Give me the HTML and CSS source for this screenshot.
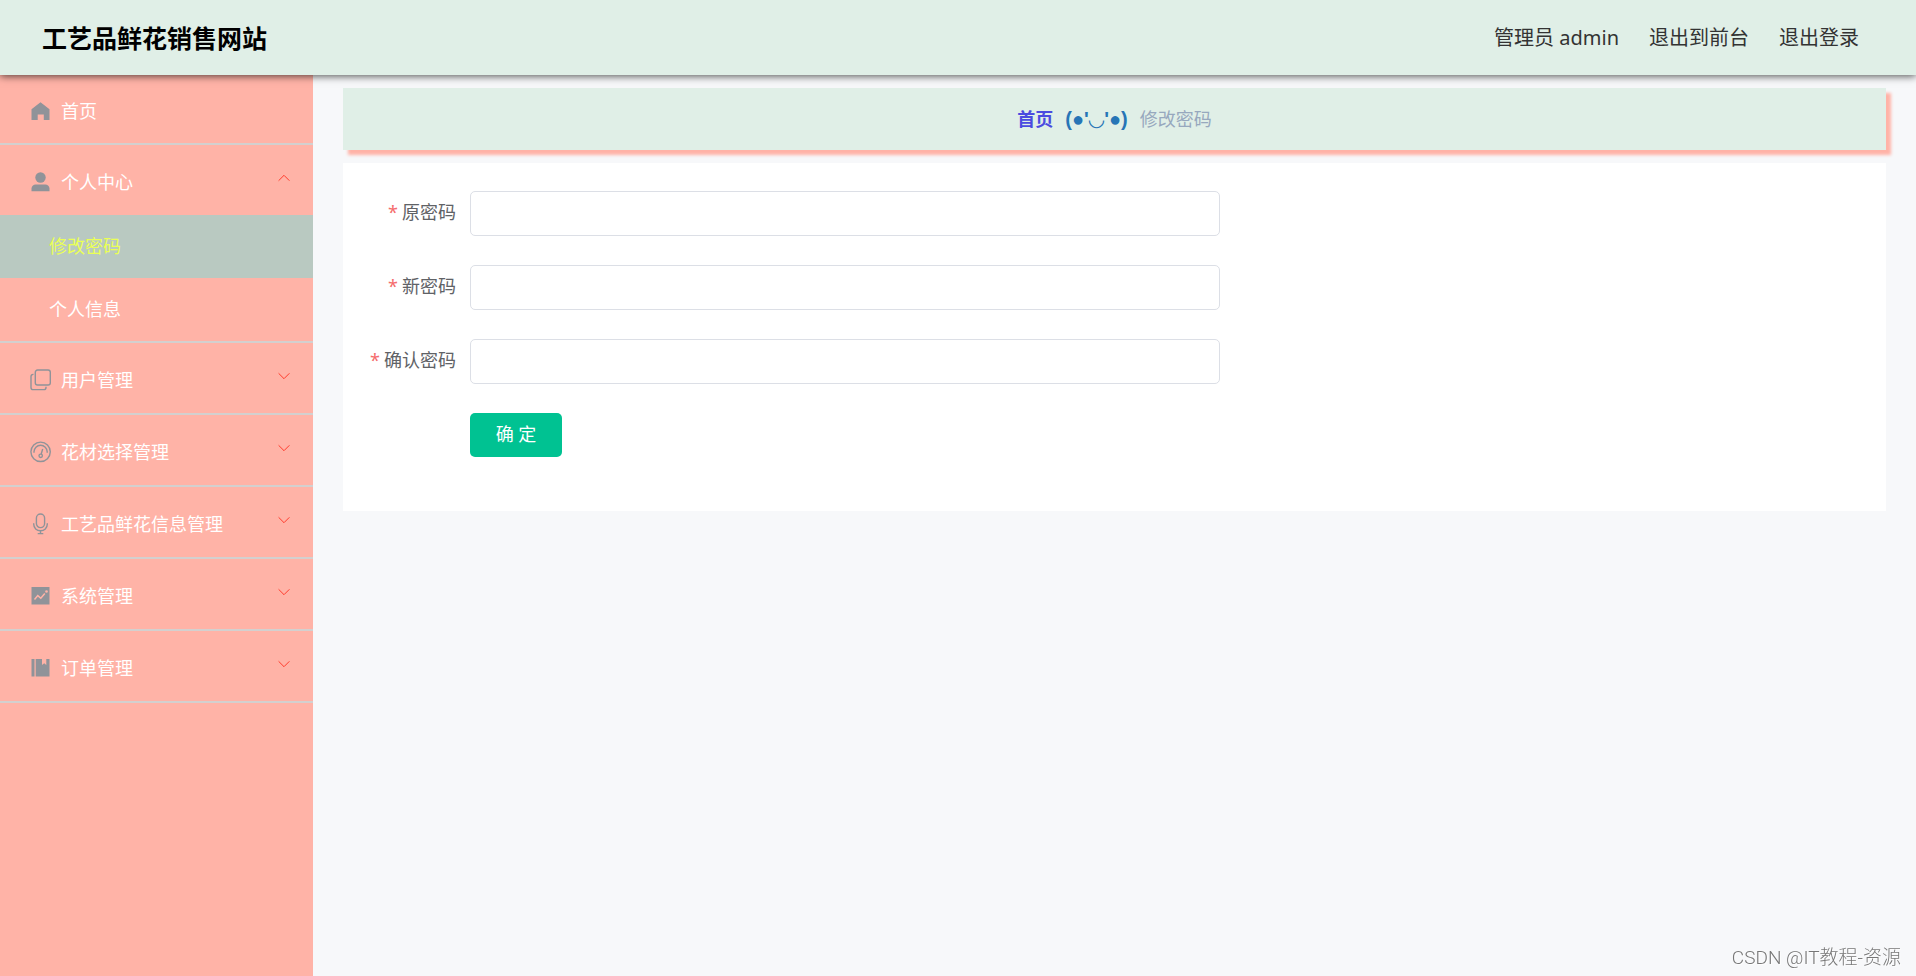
FILE: index.html
```html
<!DOCTYPE html>
<html lang="zh-CN">
<head>
<meta charset="utf-8">
<title>工艺品鲜花销售网站</title>
<link rel="stylesheet" href="styles.css">
</head>
<body>
<header class="topbar">
  <h1 class="brand">工艺品鲜花销售网站</h1>
  <nav class="account">
    <span>管理员 admin</span>
    <a href="#front">退出到前台</a>
    <a href="#logout">退出登录</a>
  </nav>
</header>
<div class="layout">
  <nav class="sidebar" aria-label="主菜单">
    <div class="group home">
      <a class="entry" href="#home">
        <svg class="icon" viewBox="0 0 22 22"><path fill="currentColor" d="M10.500 2.300 19.500 9.200V20h-5.700v-5.600H7.700V20H1.500V9.200z"/></svg>
        <span>首页</span>
      </a>
    </div>
    <div class="group">
      <button class="entry" type="button" aria-expanded="true">
        <svg class="icon" viewBox="0 0 22 22"><circle cx="10.500" cy="6.500" r="5.200" fill="currentColor"/><path fill="currentColor" d="M1.500 20.200v-2.600C1.500 15 3.300 13.400 5.700 13.400h9.600c2.400 0 4.200 1.600 4.200 4.200v2.600z"/></svg>
        <span>个人中心</span>
        <svg class="chevron" viewBox="0 0 12 12"><path d="M.6 8.700 6 3.300l5.400 5.400" fill="none" stroke="currentColor"/></svg>
      </button>
      <a class="sub active" href="#password">修改密码</a>
      <a class="sub" href="#profile">个人信息</a>
    </div>
    <div class="group">
      <button class="entry" type="button" aria-expanded="false">
        <svg class="icon" viewBox="0 0 22 22" fill="none" stroke="currentColor" stroke-width="1.400"><rect x="5.300" y="1" width="15" height="15" rx="2.200"/><path d="M3.500 5.400H3.200A2.200 2.200 0 0 0 1 7.600v10.800A2.200 2.200 0 0 0 3.200 20.600h10.600A2.200 2.200 0 0 0 16 18.400v-.6"/></svg>
        <span>用户管理</span>
        <svg class="chevron" viewBox="0 0 12 12"><path d="M.6 3.300 6 8.700l5.400-5.400" fill="none" stroke="currentColor"/></svg>
      </button>
    </div>
    <div class="group">
      <button class="entry" type="button" aria-expanded="false">
        <svg class="icon" viewBox="0 0 22 22" fill="none" stroke="currentColor" stroke-width="1.400"><circle cx="10.600" cy="10.800" r="9.700"/><path d="M4 11.800v-1a6.600 6.600 0 0 1 13.200 0v1M12.700 8l-1.500 5"/><circle cx="10.700" cy="14.800" r="1.700"/></svg>
        <span>花材选择管理</span>
        <svg class="chevron" viewBox="0 0 12 12"><path d="M.6 3.300 6 8.700l5.400-5.400" fill="none" stroke="currentColor"/></svg>
      </button>
    </div>
    <div class="group">
      <button class="entry" type="button" aria-expanded="false">
        <svg class="icon" viewBox="0 0 22 22" fill="none" stroke="currentColor" stroke-width="1.400"><rect x="6.400" y="1" width="8.200" height="13.600" rx="4.100"/><path d="M3.700 10.200v.8c0 4 3 6.800 6.800 6.800s6.800-2.800 6.800-6.800v-.8M10.500 17.800v2.700M7.700 20.600h5.600"/></svg>
        <span>工艺品鲜花信息管理</span>
        <svg class="chevron" viewBox="0 0 12 12"><path d="M.6 3.300 6 8.700l5.400-5.400" fill="none" stroke="currentColor"/></svg>
      </button>
    </div>
    <div class="group">
      <button class="entry" type="button" aria-expanded="false">
        <svg class="icon" viewBox="0 0 22 22"><path fill="currentColor" d="M1.500 2h18v17.500h-18z"/><path d="m4.500 14.600 3.300-4 3 2.600 4-4.800" fill="none" stroke="#ffb3a7" stroke-width="1.500"/><circle cx="16.500" cy="6.500" r="1.300" fill="#ffb3a7"/></svg>
        <span>系统管理</span>
        <svg class="chevron" viewBox="0 0 12 12"><path d="M.6 3.300 6 8.700l5.400-5.400" fill="none" stroke="currentColor"/></svg>
      </button>
    </div>
    <div class="group">
      <button class="entry" type="button" aria-expanded="false">
        <svg class="icon" viewBox="0 0 22 22"><path fill="currentColor" d="M1.500 2h3v17.500h-3zM5.700 2H12v6l2.200-1.700L16.300 8V2h3.200v17.500H5.700z"/></svg>
        <span>订单管理</span>
        <svg class="chevron" viewBox="0 0 12 12"><path d="M.6 3.300 6 8.700l5.400-5.400" fill="none" stroke="currentColor"/></svg>
      </button>
    </div>
  </nav>
  <main class="content">
    <nav class="crumbs" aria-label="面包屑">
      <a class="crumb-home" href="#home">首页</a>
      <span class="crumb-mark">(●'◡'●)</span>
      <span class="crumb-here">修改密码</span>
    </nav>
    <form class="panel">
      <div class="field">
        <label for="old-password">原密码</label>
        <input id="old-password" type="password" required>
      </div>
      <div class="field">
        <label for="new-password">新密码</label>
        <input id="new-password" type="password" required>
      </div>
      <div class="field">
        <label for="confirm-password">确认密码</label>
        <input id="confirm-password" type="password" required>
      </div>
      <button class="submit" type="button">确 定</button>
    </form>
  </main>
</div>
<div class="watermark">CSDN @IT教程-资源</div>
</body>
</html>
```

FILE: styles.css
```css
* {
  box-sizing: border-box;
}

body {
  margin: 0;
  min-height: 100vh;
  display: flex;
  flex-direction: column;
  background: #f7f8fa;
  font-family: "Noto Sans", "Noto Sans CJK SC", sans-serif;
  font-size: 18px;
  font-weight: 400;
  line-height: 24px;
}

a {
  color: inherit;
  text-decoration: none;
}

button,
input {
  font: inherit;
}

.topbar {
  position: relative;
  z-index: 1;
  display: flex;
  align-items: center;
  justify-content: space-between;
  height: 75px;
  padding: 0 57px 0 42px;
  background: #e0efe7;
  box-shadow: 0 1px 8px rgba(0, 0, 0, 0.7);
}

.brand {
  margin: 0;
  font-size: 25px;
  font-weight: 700;
  line-height: 32px;
  color: #000;
}

.account {
  display: flex;
  gap: 30px;
  font-size: 20px;
  color: #333;
}

.layout {
  flex: 1;
  display: flex;
}

.sidebar {
  flex: 0 0 313px;
  background: #ffb3a7;
}

.group {
  border-bottom: 2px solid #d3d0cf;
}

.entry {
  display: flex;
  align-items: center;
  gap: 9px;
  width: 100%;
  height: 70px;
  padding: 4px 23px 0 30px;
  border: 0;
  background: none;
  color: #fff;
  text-align: left;
  cursor: pointer;
}

.home .entry {
  height: 68px;
}

.icon {
  width: 22px;
  height: 22px;
  color: #909399;
}

.chevron {
  width: 12px;
  height: 12px;
  margin: 0 0 8px auto;
  color: #ff3c2c;
}

.sub {
  display: flex;
  align-items: center;
  height: 63px;
  padding: 0 0 2px 49px;
  color: #fff;
}

.sub.active {
  background: #b9c9c1;
  color: #eaff56;
}

.content {
  flex: 1;
  padding: 13px 30px;
}

.crumbs {
  display: flex;
  align-items: center;
  justify-content: center;
  gap: 12px;
  height: 62px;
  margin-bottom: 13px;
  background: #e0efe7;
  box-shadow: 5px 5px 3px #ffb3a7;
}

.crumb-home {
  font-weight: 700;
  color: #4b4be0;
}

.crumb-mark {
  font-family: "Liberation Sans", "DejaVu Sans", sans-serif;
  font-size: 20px;
  font-weight: 700;
  color: #2775b6;
}

.crumb-here {
  color: #97a8be;
}

.panel {
  padding: 28px 43px 54px 0;
  background: #fff;
}

.field {
  display: flex;
  align-items: center;
  margin-bottom: 29px;
}

.field label {
  width: 127px;
  padding: 0 14px 4px 0;
  text-align: right;
  color: #606266;
}

.field label::before {
  content: "*";
  margin-right: 4px;
  color: #f56c6c;
}

.field input {
  width: 50%;
  height: 45px;
  padding: 0 19px;
  border: 1px solid #dcdfe6;
  border-radius: 5px;
  background: #fff;
  color: #606266;
}

.submit {
  display: block;
  width: 92px;
  height: 44px;
  margin-left: 127px;
  padding: 0 0 2px;
  border: 0;
  border-radius: 5px;
  background: #00c292;
  color: #fff;
  cursor: pointer;
}

.watermark {
  position: fixed;
  right: 15px;
  bottom: 6px;
  font-family: Roboto, "Noto Sans CJK SC", sans-serif;
  font-size: 19px;
  font-weight: 300;
  color: #777;
  text-shadow: 1px 1px 1px #fff;
}
```
